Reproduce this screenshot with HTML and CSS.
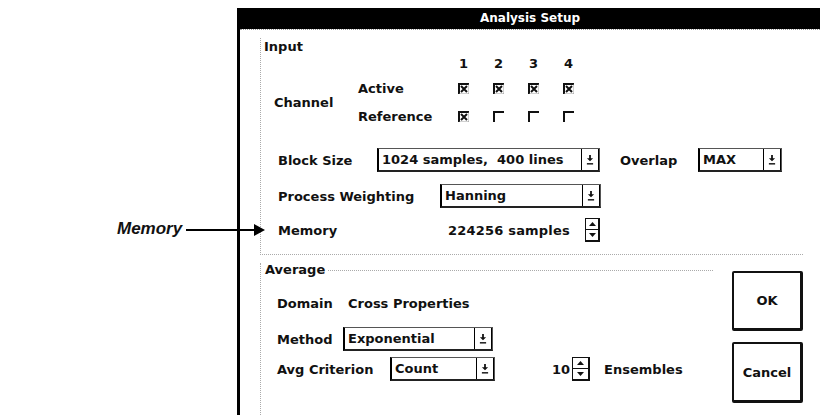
FILE: index.html
```html
<!DOCTYPE html>
<html lang="en">
<head>
    <meta charset="UTF-8">
    <title>Analysis Setup</title>
    <link rel="stylesheet" href="styles.css">
</head>
<body>
    <div class="page">
        <div class="callout"><span class="callout-label">Memory</span></div>
        <div class="arrow"></div>

        <div class="dialog">
            <div class="titlebar">Analysis Setup</div>
            <div class="dialog-body">

                <div class="group group-input">
                    <div class="group-title">Input</div>

                    <div class="channel-grid">
                        <span class="num c1">1</span>
                        <span class="num c2">2</span>
                        <span class="num c3">3</span>
                        <span class="num c4">4</span>

                        <span class="channel-label">Channel</span>
                        <span class="sub-label r2">Active</span>
                        <span class="box r2 c1"><svg class="check" viewBox="0 0 11 11"><path class="edge" d="M1 11V1h10"/><path class="shade" d="M11 1v10H1"/><path class="x" d="M3 3l6 6M9 3l-6 6"/></svg></span>
                        <span class="box r2 c2"><svg class="check" viewBox="0 0 11 11"><path class="edge" d="M1 11V1h10"/><path class="shade" d="M11 1v10H1"/><path class="x" d="M3 3l6 6M9 3l-6 6"/></svg></span>
                        <span class="box r2 c3"><svg class="check" viewBox="0 0 11 11"><path class="edge" d="M1 11V1h10"/><path class="shade" d="M11 1v10H1"/><path class="x" d="M3 3l6 6M9 3l-6 6"/></svg></span>
                        <span class="box r2 c4"><svg class="check" viewBox="0 0 11 11"><path class="edge" d="M1 11V1h10"/><path class="shade" d="M11 1v10H1"/><path class="x" d="M3 3l6 6M9 3l-6 6"/></svg></span>

                        <span class="sub-label r3">Reference</span>
                        <span class="box r3 c1"><svg class="check" viewBox="0 0 11 11"><path class="edge" d="M1 11V1h10"/><path class="shade" d="M11 1v10H1"/><path class="x" d="M3 3l6 6M9 3l-6 6"/></svg></span>
                        <span class="box r3 c2"><svg class="check" viewBox="0 0 11 11"><path class="edge" d="M1 11V1h10"/></svg></span>
                        <span class="box r3 c3"><svg class="check" viewBox="0 0 11 11"><path class="edge" d="M1 11V1h10"/></svg></span>
                        <span class="box r3 c4"><svg class="check" viewBox="0 0 11 11"><path class="edge" d="M1 11V1h10"/></svg></span>
                    </div>

                    <div class="row row-block">
                        <span class="label w-block">Block Size</span>
                        <div class="combo combo-block">
                            <span class="combo-value">1024 samples,&nbsp; 400 lines</span>
                            <span class="combo-btn"><svg viewBox="0 0 9 11"><path d="M3.5 0h2v3.5h2.5L4.5 7 1 3.5h2.5z"/><rect x="1" y="9" width="7" height="1.6"/></svg></span>
                        </div>
                        <span class="label w-overlap">Overlap</span>
                        <div class="combo combo-overlap">
                            <span class="combo-value">MAX</span>
                            <span class="combo-btn"><svg viewBox="0 0 9 11"><path d="M3.5 0h2v3.5h2.5L4.5 7 1 3.5h2.5z"/><rect x="1" y="9" width="7" height="1.6"/></svg></span>
                        </div>
                    </div>

                    <div class="row row-process">
                        <span class="label w-process">Process Weighting</span>
                        <div class="combo combo-process">
                            <span class="combo-value">Hanning</span>
                            <span class="combo-btn"><svg viewBox="0 0 9 11"><path d="M3.5 0h2v3.5h2.5L4.5 7 1 3.5h2.5z"/><rect x="1" y="9" width="7" height="1.6"/></svg></span>
                        </div>
                    </div>

                    <div class="row row-memory">
                        <span class="label w-memory">Memory</span>
                        <span class="mem-value">224256 samples</span>
                        <div class="spin spin-memory">
                            <span><svg viewBox="0 0 7 4"><path d="M0 4L3.5 0 7 4z"/></svg></span>
                            <span><svg viewBox="0 0 7 4"><path d="M0 0h7L3.5 4z"/></svg></span>
                        </div>
                    </div>
                </div>

                <div class="lower">
                    <div class="group group-average">
                        <div class="group-title title-line">Average</div>

                        <div class="row row-domain">
                            <span class="label w-domain">Domain</span>
                            <span>Cross Properties</span>
                        </div>

                        <div class="row row-method">
                            <span class="label w-method">Method</span>
                            <div class="combo combo-method">
                                <span class="combo-value">Exponential</span>
                                <span class="combo-btn"><svg viewBox="0 0 9 11"><path d="M3.5 0h2v3.5h2.5L4.5 7 1 3.5h2.5z"/><rect x="1" y="9" width="7" height="1.6"/></svg></span>
                            </div>
                        </div>

                        <div class="row row-criterion">
                            <span class="label w-criterion">Avg Criterion</span>
                            <div class="combo combo-count">
                                <span class="combo-value">Count</span>
                                <span class="combo-btn"><svg viewBox="0 0 9 11"><path d="M3.5 0h2v3.5h2.5L4.5 7 1 3.5h2.5z"/><rect x="1" y="9" width="7" height="1.6"/></svg></span>
                            </div>
                            <span class="ens-count">10</span>
                            <div class="spin spin-ens">
                                <span><svg viewBox="0 0 7 4"><path d="M0 4L3.5 0 7 4z"/></svg></span>
                                <span><svg viewBox="0 0 7 4"><path d="M0 0h7L3.5 4z"/></svg></span>
                            </div>
                            <span class="ens-label">Ensembles</span>
                        </div>
                    </div>

                    <div class="buttons">
                        <button class="btn btn-ok">OK</button>
                        <button class="btn btn-cancel">Cancel</button>
                    </div>
                </div>

            </div>
        </div>
    </div>
</body>
</html>
```

FILE: styles.css
```css
body {
    margin: 0;
    background: #fff;
    color: #111;
    font-family: "DejaVu Sans", sans-serif;
    font-weight: bold;
    font-size: 13px;
}
.page {
    position: relative;
    display: flex;
    height: 415px;
    overflow: hidden;
}

/* annotation on the left */
.callout {
    width: 237px;
    flex: none;
    box-sizing: border-box;
    padding: 219px 0 0 117px;
}
.callout-label {
    font-family: "Liberation Sans", Arial, sans-serif;
    font-style: italic;
    font-weight: bold;
    font-size: 17px;
    line-height: 20px;
}
.arrow {
    position: absolute;
    left: 186px;
    top: 229px;
    width: 68px;
    height: 2px;
    background: #000;
}
.arrow::after {
    content: "";
    position: absolute;
    left: 68px;
    top: -5px;
    border-left: 11px solid #000;
    border-top: 6px solid transparent;
    border-bottom: 6px solid transparent;
}

/* dialog */
.dialog {
    flex: 1;
    margin-top: 8px;
    border-left: 3px solid #000;
    display: flex;
    flex-direction: column;
}
.titlebar {
    height: 21px;
    background: #000;
    color: #fff;
    font-size: 12px;
    line-height: 21px;
    text-align: center;
}
.dialog-body {
    border-top: 1px dotted #999;
    padding: 8px 17px 0 20px;
}
.group {
    border-left: 1px dotted #aaa;
}
.group-input {
    border-bottom: 1px dotted #aaa;
    padding: 2px 0 12px 3px;
}
.group-title {
    line-height: 14px;
}

/* channel matrix */
.channel-grid {
    display: grid;
    grid-template-columns: 84px 88px repeat(4, 35px);
    grid-template-rows: 20px 28px 28px;
    align-items: center;
    margin-left: 10px;
}
.num, .box {
    justify-self: center;
    line-height: 14px;
}
.num { grid-row: 1; }
.c1 { grid-column: 3; }
.c2 { grid-column: 4; }
.c3 { grid-column: 5; }
.c4 { grid-column: 6; }
.r2 { grid-row: 2; }
.r3 { grid-row: 3; }
.channel-label {
    grid-column: 1;
    grid-row: 2 / 4;
}
.sub-label { grid-column: 2; }
.box { display: flex; }
.check {
    width: 11px;
    height: 11px;
    fill: none;
}
.check .edge { stroke: #111; stroke-width: 2; }
.check .shade { stroke: #888; stroke-width: 0.8; }
.check .x { stroke: #111; stroke-width: 2; }

/* rows of fields */
.row {
    display: flex;
    align-items: center;
    height: 24px;
    margin-left: 14px;
}
.label { flex: none; }
.row-block { margin-top: 18px; }
.row-process { margin-top: 12px; }
.row-memory { margin-top: 10px; }
.w-block { width: 99px; }
.w-overlap { width: 78px; margin-left: 20px; }
.w-process { width: 162px; }
.w-memory { width: 170px; }

.combo {
    display: flex;
    height: 24px;
    box-sizing: border-box;
    border: 1px solid #555;
    border-left: 2px solid #000;
    border-bottom: 2px solid #222;
}
.combo-value {
    flex: 1;
    padding-left: 3px;
    line-height: 21px;
    white-space: nowrap;
    overflow: hidden;
}
.combo-btn {
    width: 16px;
    flex: none;
    display: flex;
    align-items: center;
    justify-content: center;
    border-left: 1px solid #000;
    border-right: 1px solid #000;
}
.combo-btn svg {
    width: 8px;
    height: 10px;
    fill: #111;
}
.combo-block { width: 223px; }
.combo-overlap { width: 84px; }
.combo-process { width: 161px; }

.mem-value {
    width: 122px;
    font-size: 13px;
    letter-spacing: 0.2px;
}
.spin {
    display: flex;
    flex-direction: column;
    height: 24px;
    box-sizing: border-box;
    border: 1px solid #111;
    border-right-width: 2px;
    border-bottom-width: 2px;
}
.spin span {
    flex: 1;
    display: flex;
    align-items: center;
    justify-content: center;
}
.spin span + span { border-top: 1px solid #111; }
.spin svg {
    width: 7px;
    height: 4px;
    fill: #111;
}
.spin-memory {
    width: 15px;
    margin-left: 15px;
}

/* average section */
.lower { display: flex; }
.group-average {
    width: 453px;
    box-sizing: border-box;
    margin-top: 8px;
    padding: 0 0 40px 4px;
}
.title-line {
    display: flex;
    align-items: center;
}
.title-line::after {
    content: "";
    flex: 1;
    border-top: 1px dotted #aaa;
    margin-left: 3px;
}
.group-average .row { margin-left: 12px; }
.row-domain { margin-top: 16px; height: 20px; }
.row-method { margin-top: 14px; }
.row-criterion { margin-top: 6px; }
.w-domain { width: 71px; }
.w-method { width: 66px; }
.w-criterion { width: 113px; }
.combo-method { width: 150px; }
.combo-count { width: 105px; }
.ens-count { margin-left: 57px; }
.spin-ens {
    width: 18px;
    margin-left: 2px;
}
.ens-label { margin-left: 14px; }

.buttons {
    display: flex;
    flex-direction: column;
    margin-left: 19px;
    padding-top: 16px;
}
.btn {
    width: 71px;
    height: 60px;
    box-sizing: border-box;
    background: #fff;
    color: #111;
    border: 2px solid #111;
    border-right-width: 3px;
    border-bottom-width: 3px;
    border-radius: 2px;
    font: inherit;
    padding: 0;
}
.btn-cancel {
    height: 61px;
    margin-top: 11px;
}
```
